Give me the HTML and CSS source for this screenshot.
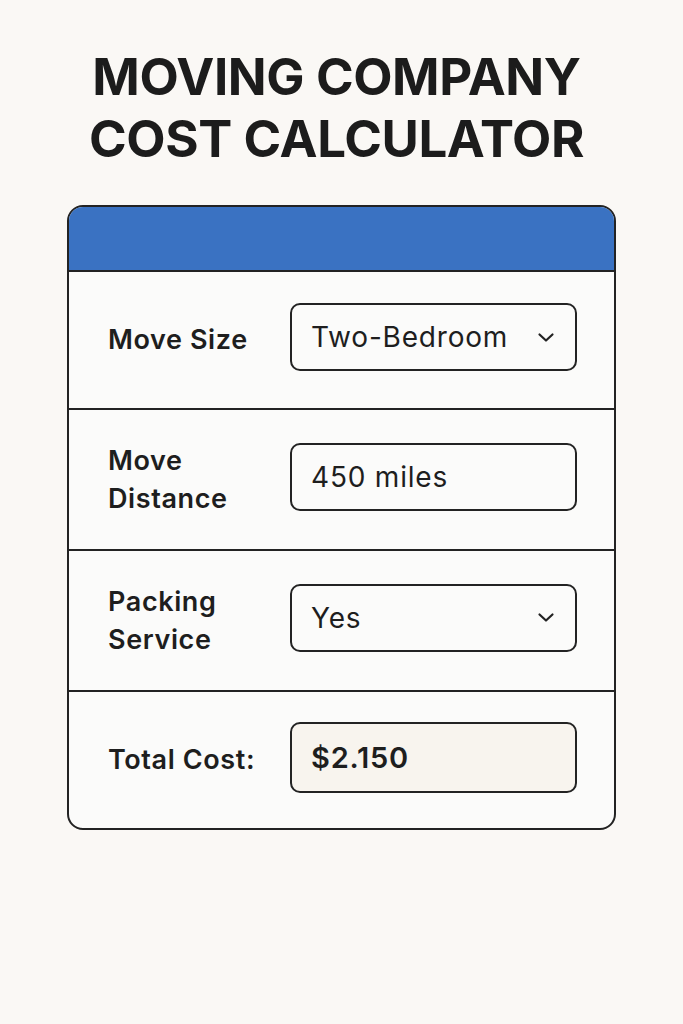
FILE: index.html
```html
<!DOCTYPE html>
<html>
<head>
<meta charset="utf-8">
<link rel="stylesheet" href="styles.css">
</head>
<body>
<main class="page">
  <h1 class="title">MOVING COMPANY<br>COST CALCULATOR</h1>
  <section class="card">
    <div class="card-header"></div>
    <div class="row">
      <div class="label">Move Size</div>
      <div class="field select">
        <span>Two-Bedroom</span>
        <svg class="chev" viewBox="0 0 18 11" width="18" height="11"><path d="M2.5 2.5 L9 8.5 L15.5 2.5" fill="none" stroke="#222" stroke-width="2.2" stroke-linecap="round" stroke-linejoin="round"/></svg>
      </div>
    </div>
    <div class="row">
      <div class="label">Move<br>Distance</div>
      <div class="field"><span>450 miles</span></div>
    </div>
    <div class="row">
      <div class="label">Packing<br>Service</div>
      <div class="field select">
        <span>Yes</span>
        <svg class="chev" viewBox="0 0 18 11" width="18" height="11"><path d="M2.5 2.5 L9 8.5 L15.5 2.5" fill="none" stroke="#222" stroke-width="2.2" stroke-linecap="round" stroke-linejoin="round"/></svg>
      </div>
    </div>
    <div class="row last">
      <div class="label">Total Cost:</div>
      <div class="field total"><span>$2.150</span></div>
    </div>
  </section>
</main>
</body>
</html>
```
FILE: styles.css
```css
html, body {
  margin: 0;
  padding: 0;
  background: #faf8f5;
  font-family: Inter, "Noto Sans", sans-serif;
  color: #1e1e1e;
}
.page {
  width: 683px;
  height: 1024px;
  display: flex;
  flex-direction: column;
  align-items: center;
}
.title {
  margin: 46px 0 0 0;
  font-size: 51px;
  font-weight: 700;
  line-height: 62px;
  text-align: center;
  letter-spacing: -0.4px;
  color: #1c1c1c;
  padding-right: 10px;
}
.card {
  margin-top: 35px;
  width: 549px;
  box-sizing: border-box;
  border: 2px solid #232323;
  border-radius: 16px;
  overflow: hidden;
  background: #fbfbfa;
}
.card-header {
  height: 63px;
  background: #3a72c2;
  border-bottom: 2px solid #232323;
}
.row {
  display: flex;
  align-items: center;
  height: 138px;
  box-sizing: border-box;
  padding: 0 37px 0 39px;
  border-bottom: 2px solid #232323;
}
.row:nth-child(3), .row:nth-child(4) {
  height: 141px;
}
.row.last {
  border-bottom: none;
  height: 136px;
}
.label {
  width: 182px;
  flex-shrink: 0;
  font-size: 27px;
  font-weight: 600;
  line-height: 38px;
  letter-spacing: 0.6px;
  color: #1e1e1e;
}
.field {
  flex: 1;
  height: 68px;
  margin-bottom: 6px;
  box-sizing: border-box;
  border: 2px solid #232323;
  border-radius: 10px;
  display: flex;
  align-items: center;
  justify-content: space-between;
  padding: 0 20px 0 19px;
  font-size: 28px;
  font-weight: 400;
  letter-spacing: 0.8px;
  color: #1e1e1e;
  background: #fbfbfa;
}
.chev {
  display: block;
}
.total {
  background: #f8f4ee;
  font-weight: 600;
  font-size: 29px;
  height: 71px;
}
```
